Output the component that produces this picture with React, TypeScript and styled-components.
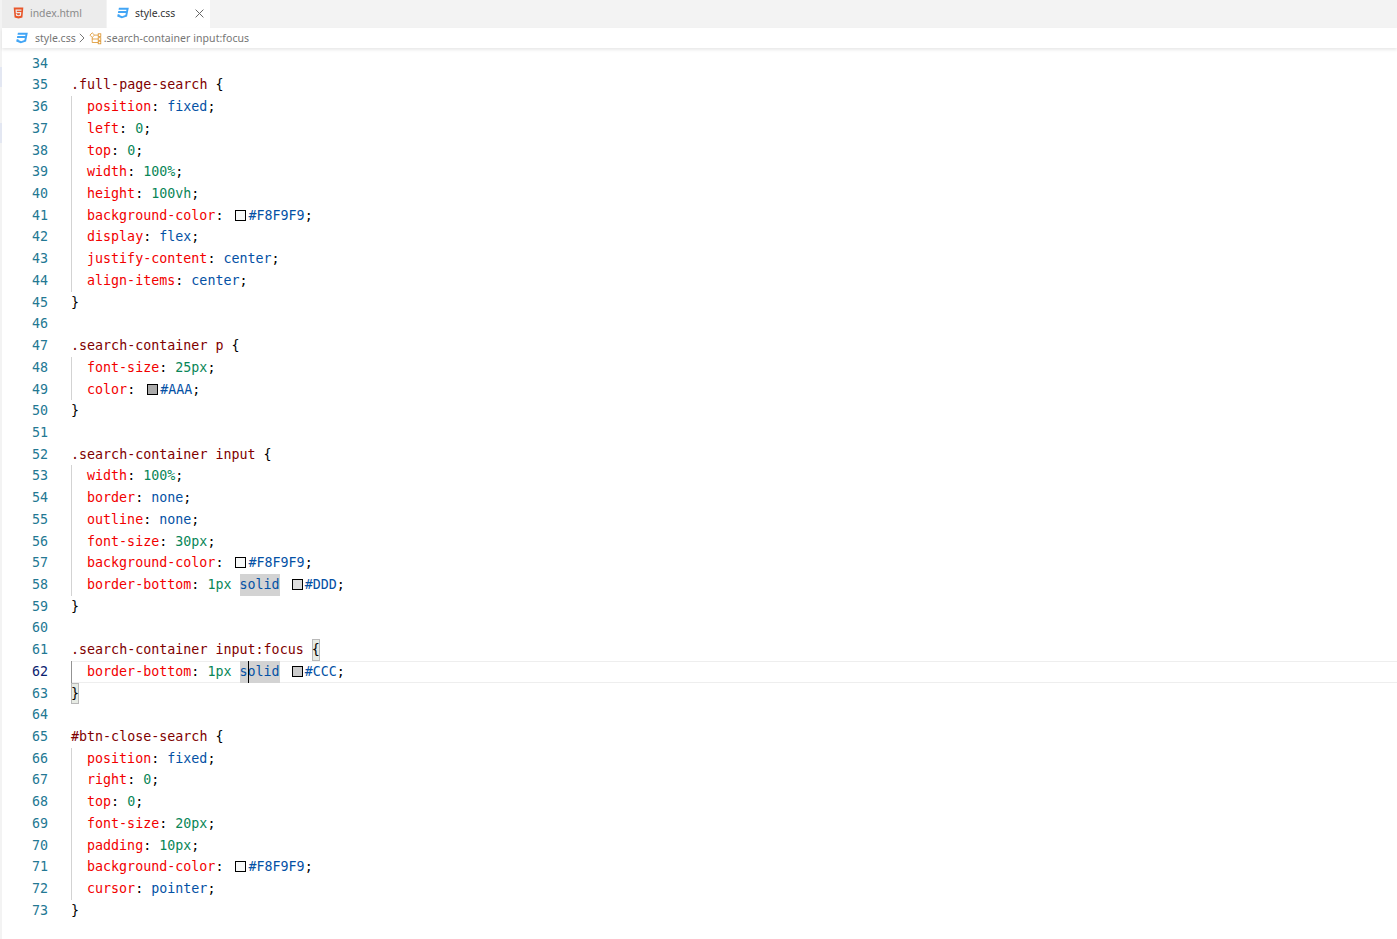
import React from "react";
import styled, { createGlobalStyle } from "styled-components";

const Global = createGlobalStyle`
  html, body { margin: 0; padding: 0; height: 100%; overflow: hidden; background: #fff; }
  #root { height: 100%; }
`;

const UI_FONT = `"Noto Sans", "Open Sans", "Liberation Sans", sans-serif`;
const LINE = 21.72;

const Page = styled.div`
  display: flex;
  height: 939px;
  overflow: hidden;
`;
const Rail = styled.aside`
  width: 2px;
  flex: none;
  display: flex;
  flex-direction: column;
  gap: 36px;
  padding-top: 67px;
  background: #f3f3f3;
`;
const RailMark = styled.div`
  height: 20px;
  background: #e3e7f2;
`;
const Main = styled.main`
  flex: 1;
  min-width: 0;
  display: flex;
  flex-direction: column;
`;
const TabBar = styled.div`
  display: flex;
  height: 28px;
  flex: none;
  background: #f3f3f3;
`;
const Tab = styled.div<{ $active?: boolean }>`
  width: ${(p) => (p.$active ? 103 : 104)}px;
  margin-left: ${(p) => (p.$active ? 1 : 0)}px;
  box-sizing: border-box;
  display: flex;
  align-items: center;
  gap: ${(p) => (p.$active ? 5 : 6)}px;
  padding-left: ${(p) => (p.$active ? 9 : 11)}px;
  padding-bottom: 2px;
  background: ${(p) => (p.$active ? "#ffffff" : "#ececec")};
  color: ${(p) => (p.$active ? "#333333" : "#8a8a8a")};
  font: 400 10.4px ${UI_FONT};
  svg { flex: none; }
`;
const TabLabel = styled.span`
  flex: 1;
`;
const CloseBtn = styled.span`
  display: flex;
  margin-right: 6px;
  color: #666;
`;
const Crumbs = styled.nav`
  position: relative;
  z-index: 2;
  flex: none;
  height: 20px;
  display: flex;
  align-items: center;
  padding-left: 13px;
  background: #fff;
  color: #757575;
  font: 400 10.5px ${UI_FONT};
  box-shadow: 0 2px 3px rgba(0, 0, 0, 0.09);
`;
const CrumbText = styled.span`
  margin-left: 6px;
`;
const CrumbSep = styled.span`
  display: flex;
  margin: 0 4px 0 3px;
  color: #777;
`;
const SymbolText = styled.span`
  margin-left: 2px;
  letter-spacing: 0.06px;
`;
const Editor = styled.section`
  flex: 1;
  overflow: hidden;
  font-family: "DejaVu Sans Mono", "Liberation Mono", monospace;
  font-size: 13.33px;
  color: #000;
`;
const Row = styled.div<{ $clip?: boolean }>`
  display: flex;
  height: ${LINE}px;
  line-height: ${LINE}px;
  white-space: pre;
  margin-top: ${(p) => (p.$clip ? "-17px" : "0")};
`;
const LineNo = styled.div<{ $active?: boolean }>`
  width: 46px;
  flex: none;
  margin-right: 23px;
  text-align: right;
  color: ${(p) => (p.$active ? "#0b216f" : "#237893")};
`;
const Code = styled.div<{ $indent?: boolean; $current?: boolean }>`
  flex: 1;
  box-sizing: border-box;
  min-width: 0;
  padding-left: ${(p) => (p.$indent ? "15px" : "0")};
  border-left: ${(p) =>
    p.$indent ? `1px solid ${p.$current ? "#939393" : "#d3d3d3"}` : "none"};
  ${(p) =>
    p.$current
      ? "box-shadow: inset 0 1px 0 #eeeeee, inset 0 -1px 0 #eeeeee;"
      : ""}
`;
const COLORS = {
  sel: "#800000",
  prop: "#f20000",
  val: "#0451a5",
  num: "#098658",
  punc: "#000000",
};
const Tok = styled.span<{ $k: keyof typeof COLORS }>`
  color: ${(p) => COLORS[p.$k]};
`;
const Occurrence = styled.span`
  position: relative;
  display: inline-block;
  height: ${LINE}px;
  vertical-align: top;
  background: #d3d3d3;
  color: #0451a5;
`;
const Caret = styled.span`
  position: absolute;
  left: 8px;
  top: 0;
  bottom: 0;
  width: 1px;
  background: #000;
`;
const BracketMatch = styled.span`
  display: inline-block;
  box-sizing: border-box;
  height: ${LINE}px;
  vertical-align: top;
  background: #e7ebe4;
  box-shadow: inset 0 0 0 1px #b9b9b9;
`;
const Swatch = styled.span<{ $c: string }>`
  display: inline-block;
  box-sizing: border-box;
  width: 11px;
  height: 11px;
  margin: 0 2px 0 4px;
  vertical-align: -1px;
  border: 1px solid #000;
  background: ${(p) => p.$c};
`;

const Html5 = () => (
  <svg width="11" height="12" viewBox="0 0 24 24" fill="#e8562a">
    <path d="M1.5 0h21l-1.91 21.563L11.977 24l-8.564-2.438L1.5 0zm7.031 9.75l-.232-2.718 10.059.003.23-2.622L5.412 4.41l.698 8.01h9.126l-.326 3.426-2.91.804-2.955-.81-.188-2.11H6.248l.33 4.171L12 19.351l5.379-1.443.744-8.157H8.531z" />
  </svg>
);
const Css3 = () => (
  <svg width="14" height="14" viewBox="0 0 24 24" fill="#42a5f5">
    <path d="M5 3l-.65 3.34h13.59L17.5 8.5H3.92l-.66 3.33h13.59l-.76 3.81-5.48 1.81-4.75-1.81.33-1.64H2.85l-.79 4 7.85 3 9.05-3 1.2-6.03.24-1.21L21.94 3z" />
  </svg>
);
const SymbolIcon = () => (
  <svg width="13" height="13" viewBox="0 0 13 13" fill="none" stroke="#d67e00" strokeWidth="0.8" strokeOpacity="0.85">
    <path d="M3.2 .8l2.3 2.3-2.3 2.3L.9 3.1z" />
    <path d="M5.5 3.1H9.2M3.2 5.4v5.1h6M3.2 7h6" />
    <rect x="9.2" y="1.8" width="2.6" height="2.6" />
    <rect x="9.2" y="5.7" width="2.6" height="2.6" />
    <rect x="9.2" y="9.2" width="2.6" height="2.6" />
  </svg>
);
const Chevron = () => (
  <svg width="6" height="10" viewBox="0 0 6 10" fill="none" stroke="currentColor" strokeWidth="1">
    <path d="M.8.8L5 5 .8 9.2" />
  </svg>
);
const XIcon = () => (
  <svg width="9" height="9" viewBox="0 0 9 9" fill="none" stroke="currentColor" strokeWidth="1">
    <path d="M.6.6l7.8 7.8M8.4.6L.6 8.4" />
  </svg>
);

type Part = React.ReactNode;
const P = (k: keyof typeof COLORS, t: string) => <Tok $k={k}>{t}</Tok>;

const decl = (name: string, ...value: Part[]): Part => (
  <>
    {P("prop", name)}
    {P("punc", ": ")}
    {value.map((v, i) => (
      <React.Fragment key={i}>{v}</React.Fragment>
    ))}
    {P("punc", ";")}
  </>
);
const v = (t: string) => P("val", t);
const n = (t: string) => P("num", t);
const color = (sw: string, t: string): Part => (
  <>
    <Swatch $c={sw} />
    {P("val", t)}
  </>
);

type L = { c?: Part; indent?: boolean; current?: boolean };
const open = (s: string): L => ({ c: <>{P("sel", s)}{P("punc", " {")}</> });
const close: L = { c: P("punc", "}") };
const empty: L = {};
const d = (name: string, ...value: Part[]): L => ({ c: decl(name, ...value), indent: true });

const lines: L[] = [
  close,
  empty,
  open(".full-page-search"),
  d("position", v("fixed")),
  d("left", n("0")),
  d("top", n("0")),
  d("width", n("100%")),
  d("height", n("100vh")),
  d("background-color", color("#f8f9f9", "#F8F9F9")),
  d("display", v("flex")),
  d("justify-content", v("center")),
  d("align-items", v("center")),
  close,
  empty,
  open(".search-container p"),
  d("font-size", n("25px")),
  d("color", color("#aaaaaa", "#AAA")),
  close,
  empty,
  open(".search-container input"),
  d("width", n("100%")),
  d("border", v("none")),
  d("outline", v("none")),
  d("font-size", n("30px")),
  d("background-color", color("#f8f9f9", "#F8F9F9")),
  d(
    "border-bottom",
    n("1px"),
    " ",
    <Occurrence>solid</Occurrence>,
    " ",
    color("#dddddd", "#DDD")
  ),
  close,
  empty,
  {
    c: (
      <>
        {P("sel", ".search-container input:focus")} <BracketMatch>{"{"}</BracketMatch>
      </>
    ),
  },
  {
    indent: true,
    current: true,
    c: decl(
      "border-bottom",
      n("1px"),
      " ",
      <Occurrence>
        solid
        <Caret />
      </Occurrence>,
      " ",
      color("#cccccc", "#CCC")
    ),
  },
  { c: <BracketMatch>{"}"}</BracketMatch> },
  empty,
  open("#btn-close-search"),
  d("position", v("fixed")),
  d("right", n("0")),
  d("top", n("0")),
  d("font-size", n("20px")),
  d("padding", n("10px")),
  d("background-color", color("#f8f9f9", "#F8F9F9")),
  d("cursor", v("pointer")),
  close,
];

export default function App() {
  return (
    <Page>
      <Global />
      <Rail>
        <RailMark />
        <RailMark />
      </Rail>
      <Main>
        <TabBar>
          <Tab>
            <Html5 />
            <TabLabel>index.html</TabLabel>
          </Tab>
          <Tab $active>
            <Css3 />
            <TabLabel>style.css</TabLabel>
            <CloseBtn>
              <XIcon />
            </CloseBtn>
          </Tab>
        </TabBar>
        <Crumbs>
          <Css3 />
          <CrumbText>style.css</CrumbText>
          <CrumbSep>
            <Chevron />
          </CrumbSep>
          <SymbolIcon />
          <SymbolText>.search-container input:focus</SymbolText>
        </Crumbs>
        <Editor>
          {lines.map((l, i) => {
            const num = 33 + i;
            return (
              <Row key={num} $clip={i === 0}>
                <LineNo $active={num === 62}>{i === 0 ? "" : num}</LineNo>
                <Code $indent={l.indent} $current={l.current}>
                  {l.c}
                </Code>
              </Row>
            );
          })}
        </Editor>
      </Main>
    </Page>
  );
}
